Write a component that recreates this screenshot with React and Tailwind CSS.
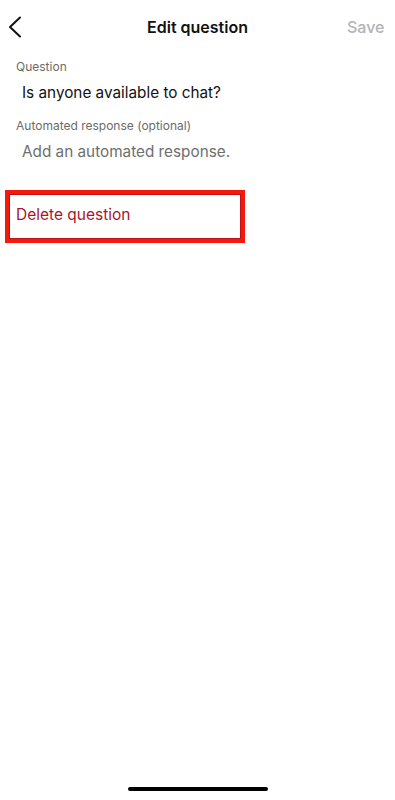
import React from 'react';

const font = { fontFamily: 'Inter, "Liberation Sans", sans-serif' };

const Field = ({ label, value, muted }) => (
  <div className="flex flex-col">
    <span className="pl-[16px] text-[12px] leading-[16px] text-[#6b6b6b]">{label}</span>
    <span className={`pl-[22px] pt-[8px] text-[15.3px] leading-[20px] ${muted ? 'text-[#6e6e6e]' : 'text-[#111]'}`}>
      {value}
    </span>
  </div>
);

export default function App() {
  return (
    <div className="relative w-[395px] h-[800px] bg-white overflow-hidden" style={font}>
      {/* header */}
      <div className="h-[54px] flex items-center justify-between px-[8px]">
        <button className="w-[40px] h-[40px] flex items-center">
          <svg width="14" height="22" viewBox="0 0 14 22" fill="none">
            <path d="M12 1.5L2 11l10 9.5" stroke="#111" strokeWidth="2" strokeLinecap="round" strokeLinejoin="round" />
          </svg>
        </button>
        <h1 className="text-[16px] font-semibold text-[#111]">Edit question</h1>
        <span className="w-[40px] pr-[5px] text-right text-[16px] font-medium text-[#b3b3b3]">Save</span>
      </div>

      <div className="flex flex-col gap-[15px] pt-[5px]">
        <Field label="Question" value="Is anyone available to chat?" />
        <Field label="Automated response (optional)" value="Add an automated response." muted />
      </div>

      <div className="mt-[28px] ml-[5px] w-[240px] h-[53px] border-[4px] border-[#f5180c]">
        <div className="h-full border border-[#c0101a] flex items-center pl-[6px] pb-[4px]">
          <span className="text-[15.5px] text-[#a8152a]">Delete question</span>
        </div>
      </div>

      <div className="absolute bottom-[9px] left-[128px] w-[140px] h-[4px] rounded-full bg-black" />
    </div>
  );
}
